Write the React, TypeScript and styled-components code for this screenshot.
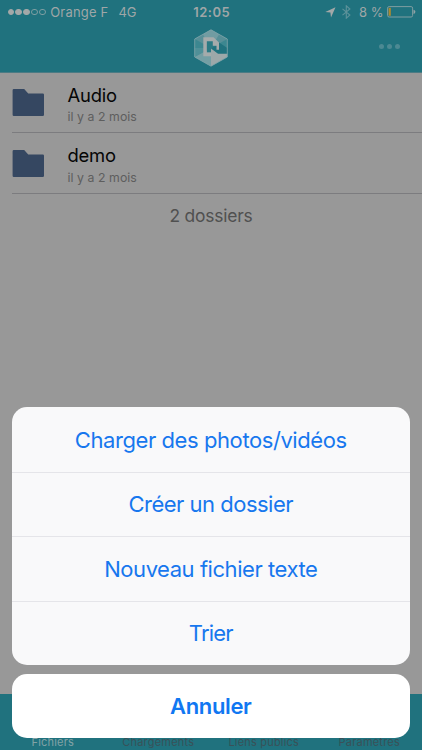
import React from "react";
import styled, { createGlobalStyle } from "styled-components";

const GlobalStyle = createGlobalStyle`
  * { box-sizing: border-box; }
  body { margin: 0; background: #989898; font-family: Inter, "Liberation Sans", sans-serif; }
  button { font-family: inherit; }
`;

const Screen = styled.div`
  position: relative;
  display: flex;
  flex-direction: column;
  width: 422px;
  height: 750px;
  overflow: hidden;
  background: #989898;
`;

const Header = styled.header`
  height: 72.5px;
  flex: none;
  background: #20727e;
  border-bottom: 1px solid #4b7b84;
`;

const StatusBar = styled.div`
  display: grid;
  grid-template-columns: 1fr auto 1fr;
  align-items: center;
  height: 24px;
  padding: 0 6px 0 7.5px;
  color: #9fa6a7;
  font-size: 13px;
  line-height: 24px;
  white-space: nowrap;
`;

const StatusGroup = styled.div<{ $end?: boolean }>`
  display: flex;
  align-items: center;
  justify-content: ${(p) => (p.$end ? "flex-end" : "flex-start")};
`;

const Signal = styled.div`
  display: flex;
  gap: 1.3px;
  margin-right: 4.5px;
`;

const Dot = styled.i<{ $empty?: boolean }>`
  width: 6.6px;
  height: 6.6px;
  border-radius: 50%;
  border: 0.8px solid ${(p) => (p.$empty ? "#7d9ea2" : "#a3a8a8")};
  background: ${(p) => (p.$empty ? "transparent" : "#a3a8a8")};
`;

const StatusText = styled.span<{ $gap?: number; $spacing?: number }>`
  margin-left: ${(p) => p.$gap ?? 0}px;
  letter-spacing: ${(p) => p.$spacing ?? 0}px;
`;

const Clock = styled.span`
  font-weight: 600;
  letter-spacing: 0.5px;
`;

const NavBar = styled.div`
  display: grid;
  grid-template-columns: 1fr 36px 1fr;
  align-items: center;
  height: 47px;
`;

const LogoSlot = styled.div`
  grid-column: 2;
  display: flex;
  justify-content: center;
`;

const MoreButton = styled.div`
  display: flex;
  gap: 2.4px;
  justify-self: end;
  margin: 0 22px 2px 0;
`;

const MoreDot = styled.i`
  width: 5.4px;
  height: 5.4px;
  border-radius: 50%;
  background: #4c8993;
`;

const List = styled.ul`
  list-style: none;
  margin: 0;
  padding: 0 0 0 12px;
`;

const Row = styled.li`
  display: flex;
  height: 60.7px;
  border-bottom: 1px solid #7c7c7f;
`;

const FolderSlot = styled.div`
  width: 55.5px;
  padding-top: 16.4px;
`;

const RowText = styled.div`
  padding-top: 10px;
`;

const Name = styled.div<{ $spacing: number }>`
  font-size: 18.4px;
  line-height: 24px;
  letter-spacing: ${(p) => p.$spacing}px;
  color: #050505;
`;

const Age = styled.div`
  padding-top: 1.8px;
  font-size: 12.3px;
  line-height: 18px;
  letter-spacing: 0.05px;
  color: #5e5e5e;
`;

const Count = styled.p`
  margin: 10px 0 0;
  text-align: center;
  font-size: 17.4px;
  line-height: 24px;
  letter-spacing: -0.2px;
  color: #505050;
`;

const TabBar = styled.nav`
  display: grid;
  grid-template-columns: repeat(4, 1fr);
  align-items: end;
  height: 56px;
  margin-top: auto;
  background: #20727e;
`;

const Tab = styled.div<{ $active?: boolean }>`
  text-align: center;
  font-size: 11px;
  line-height: 16px;
  letter-spacing: 0.2px;
  color: ${(p) => (p.$active ? "#82a2a6" : "#395158")};
`;

const Sheet = styled.div`
  position: absolute;
  left: 11.5px;
  right: 12px;
  bottom: 12px;
  display: flex;
  flex-direction: column;
  gap: 9px;
`;

const Actions = styled.div`
  overflow: hidden;
  border-radius: 15px;
  background: #f9f9fa;
`;

const Action = styled.button<{ $spacing: number }>`
  display: block;
  width: 100%;
  height: 64.5px;
  padding: 0;
  border: 0;
  border-top: 1px solid #e5e5e9;
  background: none;
  color: #1777ee;
  font-size: 22px;
  letter-spacing: ${(p) => p.$spacing}px;
  &:first-child { border-top-color: transparent; }
`;

const Cancel = styled.button`
  height: 64px;
  padding: 0;
  border: 0;
  border-radius: 15px;
  background: #fff;
  color: #1177f2;
  font-size: 22px;
  font-weight: 600;
  letter-spacing: -0.35px;
`;

const Logo = () => (
  <svg width="36" height="40" viewBox="0 0 36 40">
    <path d="M18 1.8 34.3 11v18L18 38.2 1.7 29V11Z" fill="#3c8790" />
    <path d="M18 1.8 34.3 11 18 20 1.7 11Z" fill="#578f97" />
    <path d="M18 1.8 26 6.5 18 20 10 6.5Z" fill="#719ca2" />
    <path d="M1.7 20 18 20 1.7 29Z" fill="#4f9098" />
    <path d="M18 20 1.7 29 18 38.2Z" fill="#749fa4" />
    <path d="M13.7 13h6.600v4.500h3.700v7h-10.300Z" fill="#2b7a84" />
    <path d="M26 14.500 34.300 20v6H25L18 20.500l6-3Z" fill="#20727e" />
    <path d="M10.300 9.300h10.200l5.500 5.200v7.200h-2.500v-4h-3.700v-4.400h-6v11.200h5v3.700h-8.500Z" fill="#a5abab" />
    <path d="M18 20.500 25 25.700h9.300V29L18 38.200Z" fill="#9da8a9" />
    <path d="M18 1.800 34.300 11v18L18 38.200 1.700 29V11Z" fill="none" stroke="#82a5aa" strokeWidth=".8" />
  </svg>
);

const Folder = () => (
  <svg width="34" height="29" viewBox="0 0 34 29">
    <path d="M.6 1.200Q.6 0 1.800 0h10.400l4 4.600h14.600q1.200 0 1.200 1.200v20q0 1.200-1.200 1.200H1.800q-1.200 0-1.200-1.200Z" fill="#354761" />
  </svg>
);

const LocationIcon = () => (
  <svg width="11" height="11" viewBox="0 0 11 11">
    <path d="M10.500.300 6 10.500 5.400 5.600.300 5Z" fill="#a3a8a8" />
  </svg>
);

const BluetoothIcon = () => (
  <svg width="9" height="14" viewBox="0 0 9 14">
    <path d="m.5 3.800 7.400 6.200-3.600 3.200V.8l3.600 3.200-7.400 6.200" fill="none" stroke="#5d929a" strokeWidth="1.100" />
  </svg>
);

const BatteryIcon = () => (
  <svg width="29" height="12" viewBox="0 0 29 12">
    <rect x=".6" y=".6" width="25" height="10.400" rx="1.500" fill="none" stroke="#7e9da1" />
    <path d="M1.600 1.800h2.200v8H1.600Z" fill="#b08a2d" />
    <path d="M26.500 3.700q1.900.400 1.900 2.100t-1.900 2.100Z" fill="#8fa2a5" />
  </svg>
);

const IconSlot = styled.span<{ $gap: number }>`
  display: flex;
  margin-left: ${(p) => p.$gap}px;
`;

const folders = [
  { name: "Audio", spacing: -0.2 },
  { name: "demo", spacing: -0.2 },
];

const actions = [
  { label: "Charger des photos/vidéos", spacing: -0.42 },
  { label: "Créer un dossier", spacing: -0.5 },
  { label: "Nouveau fichier texte", spacing: -0.45 },
  { label: "Trier", spacing: -0.8 },
];

const tabs = ["Fichiers", "Chargements", "Liens publics", "Paramètres"];

export default function App() {
  return (
    <Screen>
      <GlobalStyle />
      <Header>
        <StatusBar>
          <StatusGroup>
            <Signal>
              <Dot /><Dot /><Dot /><Dot $empty /><Dot $empty />
            </Signal>
            <StatusText $spacing={0.2}>Orange F</StatusText>
            <StatusText $gap={10}>4G</StatusText>
          </StatusGroup>
          <Clock>12:05</Clock>
          <StatusGroup $end>
            <LocationIcon />
            <IconSlot $gap={5.5}><BluetoothIcon /></IconSlot>
            <StatusText $gap={8.5}>8 %</StatusText>
            <IconSlot $gap={3.5}><BatteryIcon /></IconSlot>
          </StatusGroup>
        </StatusBar>
        <NavBar>
          <LogoSlot><Logo /></LogoSlot>
          <MoreButton><MoreDot /><MoreDot /><MoreDot /></MoreButton>
        </NavBar>
      </Header>
      <List>
        {folders.map((f) => (
          <Row key={f.name}>
            <FolderSlot><Folder /></FolderSlot>
            <RowText>
              <Name $spacing={f.spacing}>{f.name}</Name>
              <Age>il y a 2 mois</Age>
            </RowText>
          </Row>
        ))}
      </List>
      <Count>2 dossiers</Count>
      <TabBar>
        {tabs.map((t, i) => (
          <Tab key={t} $active={i === 0}>{t}</Tab>
        ))}
      </TabBar>
      <Sheet>
        <Actions>
          {actions.map((a) => (
            <Action key={a.label} $spacing={a.spacing}>{a.label}</Action>
          ))}
        </Actions>
        <Cancel>Annuler</Cancel>
      </Sheet>
    </Screen>
  );
}
